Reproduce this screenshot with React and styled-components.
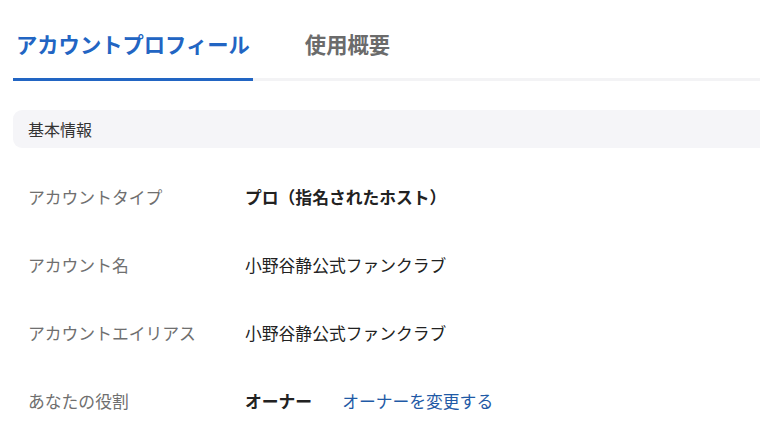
import React from "react";
import styled, { createGlobalStyle } from "styled-components";

const Global = createGlobalStyle`
  html, body {
    margin: 0;
    padding: 0;
    background: #ffffff;
    overflow: hidden;
  }
  body {
    font-family: "Noto Sans CJK JP", "Noto Sans", sans-serif;
  }
`;

const Page = styled.div`
  width: 100%;
  padding-left: 13px;
  box-sizing: border-box;
`;

const TabBar = styled.div`
  display: flex;
  align-items: flex-end;
  gap: 49px;
  padding-top: 28px;
  border-bottom: 3px solid #f3f3f5;
`;

const Tab = styled.div`
  font-size: 21.3px;
  line-height: 32px;
  font-weight: 700;
  padding: 0 3px 18px 3px;
  margin-bottom: -3px;
  color: ${(p) => (p.$active ? "#2265c3" : "#6b6b6b")};
  border-bottom: 3px solid ${(p) => (p.$active ? "#2265c3" : "transparent")};
`;

const SectionHeader = styled.div`
  margin-top: 29px;
  height: 38px;
  display: flex;
  align-items: center;
  padding-left: 15px;
  background: #f5f5f8;
  border-radius: 9px 0 0 9px;
  font-size: 16px;
  color: #333333;
`;

const List = styled.div`
  margin-top: 15px;
  display: flex;
  flex-direction: column;
`;

const Row = styled.div`
  height: 68px;
  display: grid;
  grid-template-columns: 217px 1fr;
  align-items: center;
  padding-left: 15px;
`;

const Label = styled.div`
  font-size: 16.8px;
  color: #6f6f6f;
`;

const Value = styled.div`
  display: flex;
  align-items: center;
  gap: 30px;
  font-size: 16.8px;
  color: #222222;
  font-weight: ${(p) => (p.$bold ? 700 : 400)};
`;

const Link = styled.a`
  font-weight: 400;
  color: #1f5aa6;
  text-decoration: none;
  cursor: pointer;
`;

export default function App() {
  return (
    <>
      <Global />
      <Page>
        <TabBar>
          <Tab $active>アカウントプロフィール</Tab>
          <Tab>使用概要</Tab>
        </TabBar>
        <SectionHeader>基本情報</SectionHeader>
        <List>
          <Row>
            <Label>アカウントタイプ</Label>
            <Value $bold>プロ（指名されたホスト）</Value>
          </Row>
          <Row>
            <Label>アカウント名</Label>
            <Value>小野谷静公式ファンクラブ</Value>
          </Row>
          <Row>
            <Label>アカウントエイリアス</Label>
            <Value>小野谷静公式ファンクラブ</Value>
          </Row>
          <Row>
            <Label>あなたの役割</Label>
            <Value $bold>
              オーナー
              <Link>オーナーを変更する</Link>
            </Value>
          </Row>
        </List>
      </Page>
    </>
  );
}
